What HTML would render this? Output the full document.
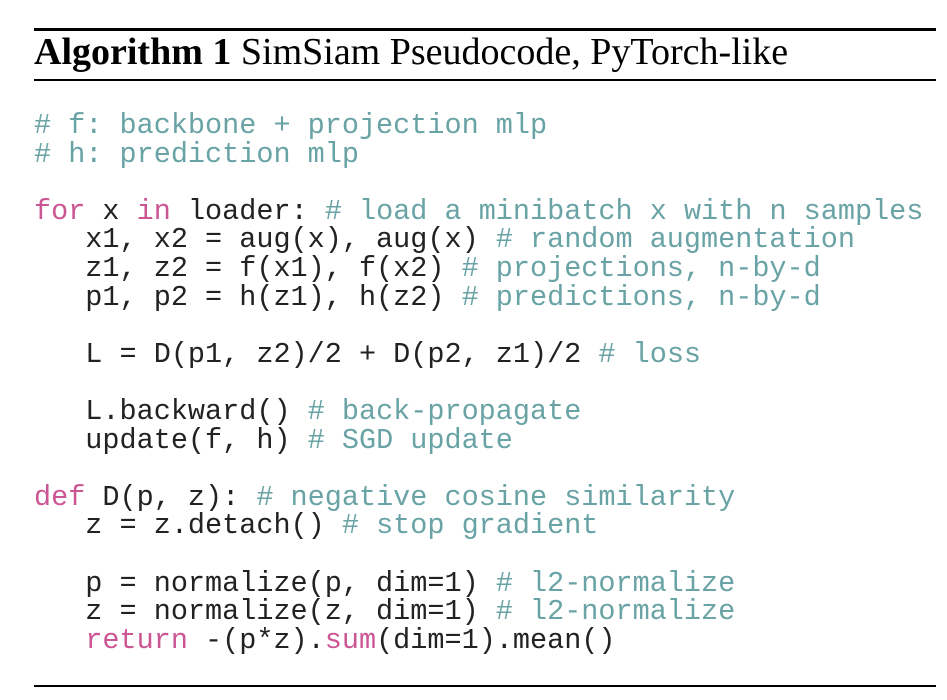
<!DOCTYPE html>
<html><head><meta charset="utf-8"><style>
html,body{margin:0;padding:0;background:#fff;width:947px;height:700px;overflow:hidden;position:relative}
.r{position:absolute;left:34px;width:902px;background:#000}
.t{position:absolute;left:34px;top:29px;font-family:"Liberation Serif",serif;font-size:38px;line-height:46px;color:#000;white-space:nowrap}
pre{position:absolute;left:34px;top:112px;margin:0;font-family:"Liberation Mono",monospace;font-size:28.5px;line-height:28.6px;color:#222;letter-spacing:0}
.c{color:#6aa3a5}.k{color:#cc5594}
</style></head><body>
<div class="r" style="top:28px;height:3px"></div>
<div class="t"><b>Algorithm 1</b> SimSiam Pseudocode, PyTorch-like</div>
<div class="r" style="top:79px;height:2px"></div>
<pre><span class="c"># f: backbone + projection mlp</span>
<span class="c"># h: prediction mlp</span>

<span class="k">for</span> x <span class="k">in</span> loader: <span class="c"># load a minibatch x with n samples</span>
   x1, x2 = aug(x), aug(x) <span class="c"># random augmentation</span>
   z1, z2 = f(x1), f(x2) <span class="c"># projections, n-by-d</span>
   p1, p2 = h(z1), h(z2) <span class="c"># predictions, n-by-d</span>

   L = D(p1, z2)/2 + D(p2, z1)/2 <span class="c"># loss</span>

   L.backward() <span class="c"># back-propagate</span>
   update(f, h) <span class="c"># SGD update</span>

<span class="k">def</span> D(p, z): <span class="c"># negative cosine similarity</span>
   z = z.detach() <span class="c"># stop gradient</span>

   p = normalize(p, dim=1) <span class="c"># l2-normalize</span>
   z = normalize(z, dim=1) <span class="c"># l2-normalize</span>
   <span class="k">return</span> -(p*z).<span class="k">sum</span>(dim=1).mean()</pre>
<div class="r" style="top:685px;height:2px"></div>
</body></html>
